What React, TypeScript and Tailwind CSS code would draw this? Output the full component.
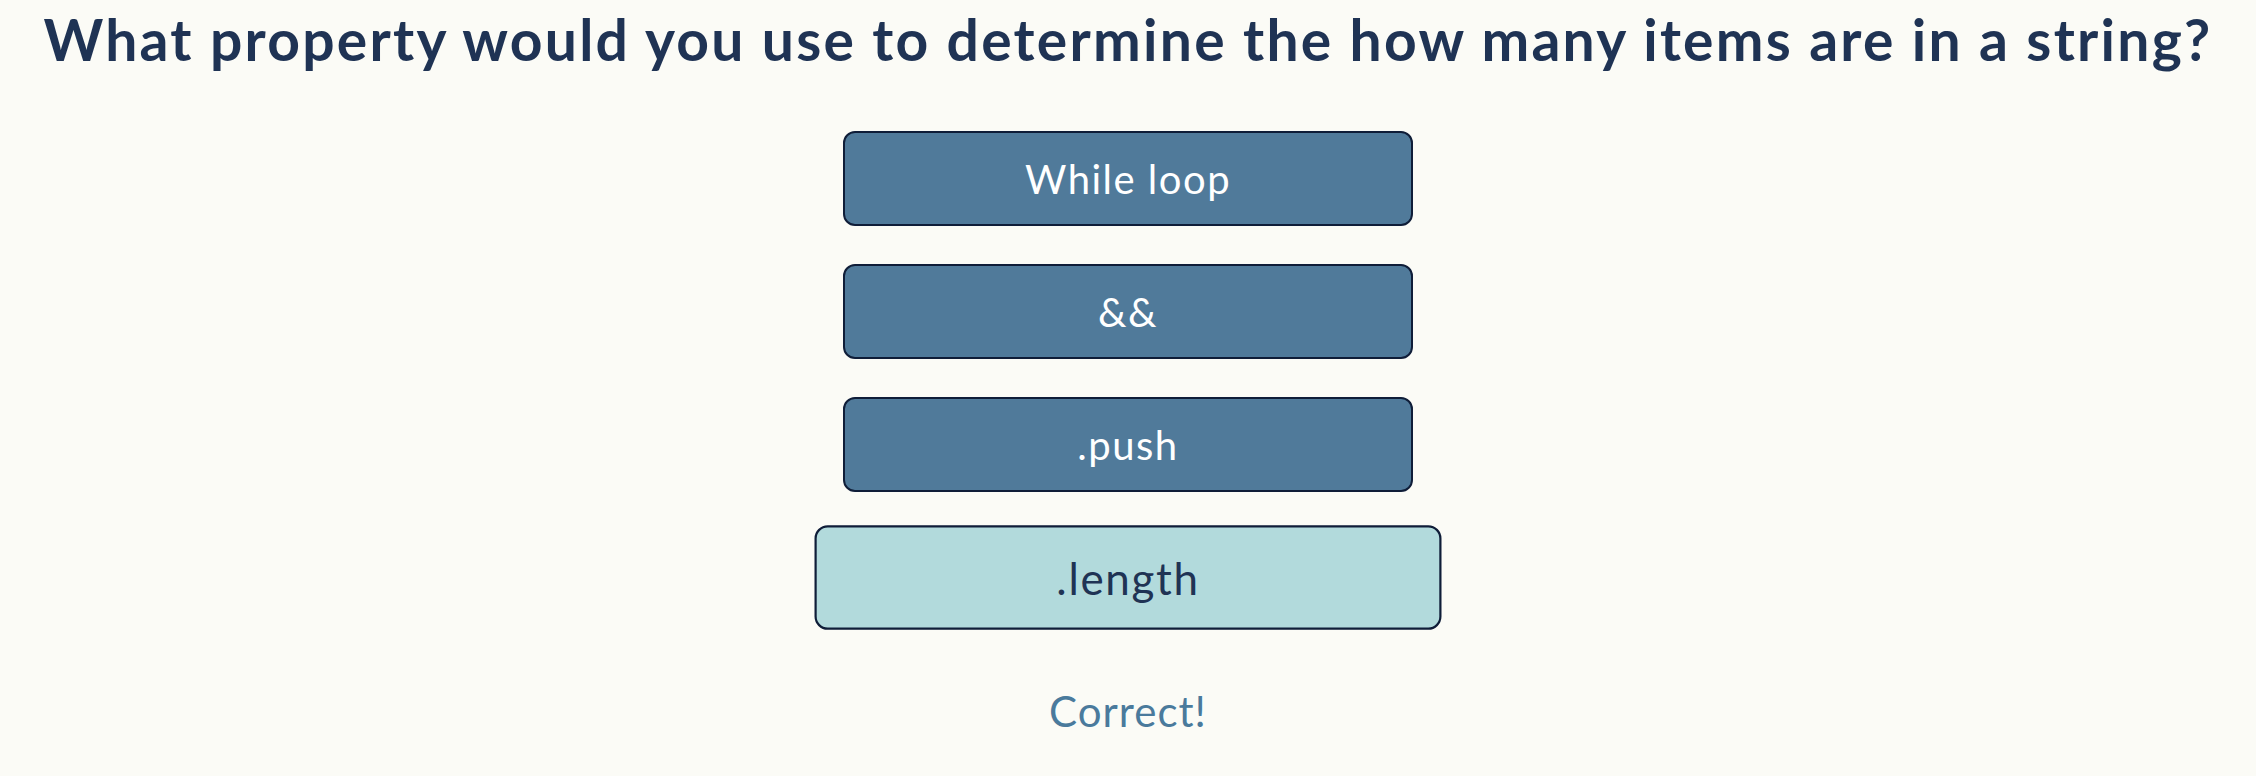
const options = [
  { label: 'While loop', selected: false },
  { label: '&&', selected: false },
  { label: '.push', selected: false },
  { label: '.length', selected: true },
]

const App = () => {
  return (
    <div className="flex flex-col items-center min-h-screen bg-[#fbfbf6] font-['Lato',sans-serif]">
      <h1 className="pt-[5px] font-bold text-[#1f3354] text-[57px] leading-[1.2] tracking-[2.25px] whitespace-nowrap">
        What property would you use to determine the how many items are in a string?
      </h1>
      <div className="flex flex-col gap-[38px] mt-[58px]">
        {options.map((o) => (
          <button
            key={o.label}
            className={
              o.selected
                ? 'flex justify-center items-center w-[570px] h-[95px] rounded-[12px] border-2 border-[#0f1d38] bg-[#b2dadc] text-[#1f3354] text-[40px] tracking-[1.5px] scale-110'
                : 'flex justify-center items-center w-[570px] h-[95px] rounded-[12px] border-2 border-[#0f1d38] bg-[#507a9a] text-white text-[40px] tracking-[1.5px]'
            }
          >
            {o.label}
          </button>
        ))}
      </div>
      <p className="mt-[55px] text-[#4a7a9c] text-[42px] tracking-[1px]">Correct!</p>
    </div>
  )
}

export default App
